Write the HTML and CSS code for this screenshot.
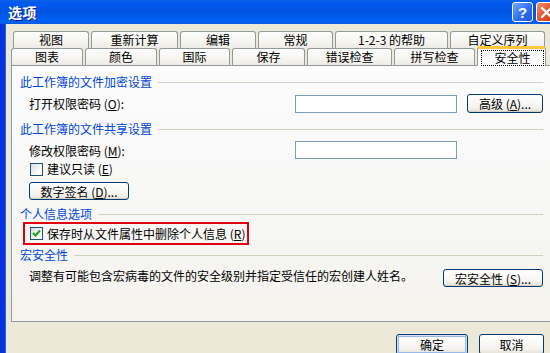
FILE: index.html
```html
<!DOCTYPE html>
<html lang="zh-CN">
<head>
  <meta charset="UTF-8">
  <title>选项</title>
  <link rel="stylesheet" href="styles.css">
</head>
<body>
  <div class="window">
    <div class="titlebar">
      <span class="title">选项</span>
      <div class="caption-btns">
        <span class="cbtn help">?</span>
        <span class="cbtn close">
          <svg width="13" height="13" viewBox="0 0 13 13"><path d="M2 2 L11 11 M11 2 L2 11" stroke="#fff" stroke-width="2.2" stroke-linecap="square"/></svg>
        </span>
      </div>
    </div>

    <div class="frame">
      <div class="tabs">
        <div class="tabrow back">
          <div class="tab">视图</div>
          <div class="tab">重新计算</div>
          <div class="tab">编辑</div>
          <div class="tab">常规</div>
          <div class="tab">1-2-3 的帮助</div>
          <div class="tab">自定义序列</div>
        </div>
        <div class="tabrow front">
          <div class="tab">图表</div>
          <div class="tab">颜色</div>
          <div class="tab">国际</div>
          <div class="tab">保存</div>
          <div class="tab">错误检查</div>
          <div class="tab">拼写检查</div>
          <div class="tab active"><span class="focus">安全性</span></div>
        </div>
      </div>

      <div class="panel">
        <div class="group">此工作簿的文件加密设置</div>
        <div class="row pw-row first">
          <span class="label">打开权限密码 (<u>O</u>):</span>
          <span class="input"></span>
          <button class="btn adv">高级 (<u>A</u>)...</button>
        </div>

        <div class="group g2">此工作簿的文件共享设置</div>
        <div class="row pw-row second">
          <span class="label">修改权限密码 (<u>M</u>):</span>
          <span class="input"></span>
        </div>
        <label class="check-row readonly">
          <span class="checkbox"></span>
          <span>建议只读 (<u>E</u>)</span>
        </label>
        <div class="row sign-row">
          <button class="btn wide">数字签名 (<u>D</u>)...</button>
        </div>

        <div class="group g3">个人信息选项</div>
        <div class="highlight">
          <label class="check-row">
            <span class="checkbox checked">
              <svg width="9" height="9" viewBox="0 0 9 9"><path d="M1 4 L3.5 6.5 L8 1.5" fill="none" stroke="#21a121" stroke-width="2"/></svg>
            </span>
            <span>保存时从文件属性中删除个人信息 (<u>R</u>)</span>
          </label>
        </div>

        <div class="group g4">宏安全性</div>
        <div class="row macro-row">
          <span class="desc">调整有可能包含宏病毒的文件的安全级别并指定受信任的宏创建人姓名。</span>
          <button class="btn wide">宏安全性 (<u>S</u>)...</button>
        </div>
      </div>

      <div class="footer">
        <button class="btn dlg default">确定</button>
        <button class="btn dlg cancel">取消</button>
      </div>
    </div>
  </div>
</body>
</html>
```

FILE: styles.css
```css
body { margin: 0; width: 550px; height: 353px; overflow: hidden; background: #ece9d8; }
.window { width: 560px; font-family: "Noto Sans CJK SC", "Liberation Sans", sans-serif; font-size: 12px; color: #000; }

/* title bar */
.titlebar {
  height: 24px; display: flex; align-items: center; justify-content: space-between;
  padding: 0 3px 0 8px; box-sizing: border-box;
  background: linear-gradient(#0a62e8, #0058ee 15%, #0054e3 50%, #0062f5 85%, #0a5ae0);
}
.title { color: #fff; font-weight: bold; font-size: 14px; letter-spacing: 0.5px; text-shadow: 1px 1px #0a1e8a; }
.caption-btns { display: flex; gap: 3px; }
.cbtn {
  width: 21px; height: 20px; box-sizing: border-box; border: 1px solid #fff; border-radius: 3px;
  display: flex; align-items: center; justify-content: center; color: #fff; font-weight: bold; font-size: 15px;
}
.help { background: linear-gradient(135deg, #6fa4ff, #2a6cf0 60%, #1c55d8); font-family: "Liberation Sans", sans-serif; }
.close { background: linear-gradient(135deg, #f0906a, #e0502a 55%, #c83a18); }

/* client area */
.frame {
  border-left: 5px solid #0831d9; box-shadow: inset 1px 0 #166aee;
  background: #ece9d8; height: 340px; padding-top: 7px; box-sizing: border-box;
}

.tabrow { display: flex; gap: 2px; height: 17px; }
.tabrow.back { margin-left: 8px; }
.tabrow.front { margin-left: 6px; position: relative; z-index: 1; }
.tab {
  box-sizing: border-box; height: 17px; border: 1px solid #919b9c; border-bottom: none;
  border-radius: 3px 3px 0 0; background: linear-gradient(#fefefe, #f4f3ee 70%, #ecebe6);
  text-align: center; line-height: 16px; white-space: nowrap;
}
.back .tab:nth-child(1) { width: 76px; }
.back .tab:nth-child(2) { width: 87px; }
.back .tab:nth-child(3) { width: 76px; }
.back .tab:nth-child(4) { width: 75px; }
.back .tab:nth-child(5) { width: 113px; }
.back .tab:nth-child(6) { width: 95px; }
.front .tab:nth-child(1) { width: 72px; }
.front .tab:nth-child(2) { width: 72px; }
.front .tab:nth-child(3) { width: 71px; }
.front .tab:nth-child(4) { width: 73px; }
.front .tab:nth-child(5) { width: 85px; }
.front .tab:nth-child(6) { width: 81px; }
.tab.active {
  width: 69px; height: 20px; margin-top: -2px; border-top: 3px solid #ffc83c;
  border-radius: 3px 3px 0 0; background: #fcfcfe; display: flex; padding: 1px 1px 0 3px;
}
.focus { flex: 1; border: 1px dotted #000; line-height: 13px; }

/* page */
.panel {
  margin-left: 6px; width: 545px; height: 257px; box-sizing: border-box;
  border: 1px solid #919b9c; background: linear-gradient(#fcfcfe, #f4f3ee);
  padding: 9px 0 0 8px;
}
.group { width: 523px; display: flex; align-items: center; color: #0046d5; line-height: 14px; }
.group::after { content: ""; flex: 1; height: 1px; background: #d0d0bf; margin-left: 6px; }
.g2 { margin-top: 9px; }
.g3 { margin-top: 7px; }
.g4 { margin-top: 3px; }

.row { display: flex; align-items: center; margin-left: 9px; }
.pw-row.first { margin-top: 5px; height: 19px; }
.pw-row.second { margin-top: 5px; height: 18px; }
.label { width: 266px; }
.input { width: 162px; height: 18px; box-sizing: border-box; border: 1px solid #7f9db9; background: #fff; }

.btn {
  font: inherit; color: #000; padding: 0; box-sizing: border-box; height: 19px;
  border: 1px solid #003c74; border-radius: 3px;
  background: linear-gradient(#fff, #f5f4ef 70%, #e3e1d6);
  box-shadow: inset 0 -1px #d6d0c5;
}
.adv { width: 76px; margin-left: 10px; }
.wide { width: 100px; height: 18px; }

.check-row { display: flex; align-items: center; gap: 4px; margin-left: 10px; line-height: 14px; }
.readonly { margin-top: 3px; }
.checkbox {
  width: 13px; height: 13px; box-sizing: border-box; border: 1px solid #1c5180;
  background: linear-gradient(135deg, #dcdcd7, #fff 80%); display: flex; align-items: center; justify-content: center;
}
.sign-row { margin-top: 6px; }

.highlight {
  margin: 1px 0 0 3px; width: 226px; height: 23px; box-sizing: border-box;
  border: 2px solid #e00010; display: flex; align-items: center;
}
.highlight .check-row { margin-left: 5px; }

.macro-row { margin-top: 7px; align-items: flex-start; }
.desc { width: 414px; line-height: 13px; }

.footer { display: flex; gap: 11px; margin: 12px 0 0 391px; }
.dlg { width: 72px; height: 21px; }
.cancel { width: 65px; }
.default { box-shadow: inset 0 0 0 1px #cee7ff, inset 0 0 0 2px #98b8ea; }
```
